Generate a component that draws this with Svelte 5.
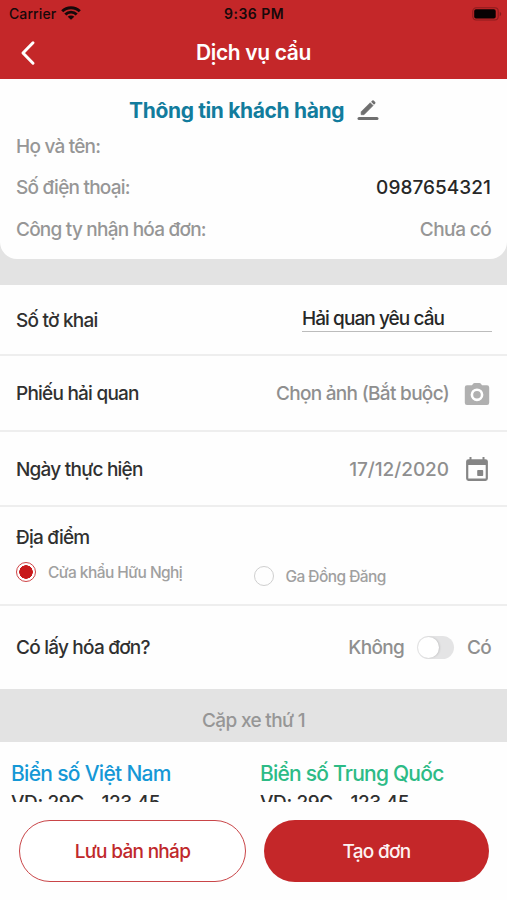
<script>
  let invoice = $state(false);
  let place = $state(0);
</script>

<div class="screen">
  <header>
    <div class="status">
      <span class="carrier">Carrier</span>
      <svg class="wifi" width="20" height="14" viewBox="0 0 20 14">
        <path d="M1.200 5.300a12.500 12.500 0 0 1 17.600 0M4.300 8.500a8 8 0 0 1 11.400 0" fill="none" stroke="#16090a" stroke-width="2.900" />
        <path d="M10 13.700 6.700 10.800a4.700 4.700 0 0 1 6.600 0z" fill="#16090a" />
      </svg>
      <span class="clock">9:36 PM</span>
      <svg class="battery" width="30" height="14" viewBox="0 0 30 14">
        <rect x="0.8" y="0.8" width="25.4" height="12.2" rx="3.4" fill="none" stroke="#8c1c1e" stroke-width="1.1" />
        <rect x="2.2" y="2.3" width="21.500" height="9.2" rx="1.8" fill="#080203" />
        <path d="M27.7 4.8v4.4q1.6-.7 1.6-2.2t-1.6-2.2z" fill="#8c1c1e" />
      </svg>
    </div>
    <div class="nav">
      <svg class="back" width="16" height="26" viewBox="0 0 16 26">
        <path d="M13 2.8 3 13l10 10.2" fill="none" stroke="#fff" stroke-width="3" stroke-linecap="round" stroke-linejoin="round" />
      </svg>
      <h1>Dịch vụ cẩu</h1>
    </div>
  </header>

  <main>
    <div class="backdrop">
      <section class="customer">
        <div class="heading">
          <h2>Thông tin khách hàng</h2>
          <svg width="22" height="22" viewBox="0 0 22 22">
            <path d="M4.1 12.8 13.2 3.7l2.9 2.9L7 15.7H4.1z" fill="#6f6f6f" stroke="#6f6f6f" stroke-width=".6" stroke-linejoin="round" />
            <path d="m14.1 2.8 1.2-1.2q.7-.6 1.4 0l1.5 1.5q.6.7 0 1.4L17 5.7z" fill="#6f6f6f" />
            <path d="M2 19.4h18" stroke="#6f6f6f" stroke-width="3" stroke-linecap="round" />
          </svg>
        </div>
        <div class="info"><span>Họ và tên:</span></div>
        <div class="info"><span>Số điện thoại:</span><span class="phone">0987654321</span></div>
        <div class="info"><span>Công ty nhận hóa đơn:</span><span class="company">Chưa có</span></div>
      </section>
    </div>

    <div class="row r1">
      <span>Số tờ khai</span>
      <div class="field"><span>Hải quan yêu cầu</span></div>
    </div>
    <div class="row r2">
      <span>Phiếu hải quan</span>
      <div class="value">
        <span>Chọn ảnh (Bắt buộc)</span>
        <svg width="26" height="24" viewBox="0 0 26 24">
          <path d="M3 3.300h5l1.300-1.700q.5-.6 1.200-.6h5q.7 0 1.200.6L18 3.300h5q2.200 0 2.200 2.200v15.200q0 2.200-2.200 2.200H3q-2.200 0-2.200-2.200V5.500Q.8 3.300 3 3.300z" fill="#b0b0b0" />
          <circle cx="13" cy="12.800" r="5.100" fill="none" stroke="#fff" stroke-width="2.600" />
        </svg>
      </div>
    </div>
    <div class="row r3">
      <span>Ngày thực hiện</span>
      <div class="value">
        <span class="date">17/12/2020</span>
        <svg width="26" height="26" viewBox="0 0 26 26">
          <path d="M4.500 3.200h17q2.400 0 2.400 2.400v17q0 2.400-2.400 2.400h-17q-2.400 0-2.400-2.400v-17q0-2.400 2.400-2.400zM4.300 9.100v13.500h17.400V9.100z" fill="#858585" fill-rule="evenodd" />
          <path d="M6.500 1v3M19.500 1v3" stroke="#858585" stroke-width="2" />
          <rect x="13.200" y="14" width="6" height="6" rx=".8" fill="#858585" />
        </svg>
      </div>
    </div>

    <div class="place">
      <span>Địa điểm</span>
      <div class="options">
        <button class="option" onclick={() => (place = 0)}>
          <i class="radio" class:on={place === 0}></i><span>Cửa khẩu Hữu Nghị</span>
        </button>
        <button class="option second" onclick={() => (place = 1)}>
          <i class="radio" class:on={place === 1}></i><span>Ga Đồng Đăng</span>
        </button>
      </div>
    </div>

    <div class="row r5">
      <span>Có lấy hóa đơn?</span>
      <div class="toggle">
        <span>Không</span>
        <button class="switch" class:active={invoice} aria-label="Có lấy hóa đơn" onclick={() => (invoice = !invoice)}><i></i></button>
        <span>Có</span>
      </div>
    </div>

    <div class="pair"><span>Cặp xe thứ 1</span></div>
    <div class="plates">
      <div class="plate vn"><h3>Biển số Việt Nam</h3><p>VD: 29C - 123.45</p></div>
      <div class="plate cn"><h3>Biển số Trung Quốc</h3><p>VD: 29C - 123.45</p></div>
    </div>
  </main>

  <footer>
    <button class="draft"><span>Lưu bản nháp</span></button>
    <button class="create"><span>Tạo đơn</span></button>
  </footer>
</div>

<style>
  :global(body) { background: #fefefe; }
  .screen {
    width: 507px;
    height: 900px;
    overflow: hidden;
    display: flex;
    flex-direction: column;
    background: #fefefe;
    color: #303030;
    font-family: Inter, "Liberation Sans", sans-serif;
    font-size: 19px;
    font-weight: 450;
    line-height: 24px;
    letter-spacing: -0.77px;
    white-space: nowrap;
  }
  h1, h2, h3, p { margin: 0; }
  span { display: block; }
  svg { display: block; flex: none; }
  button { font: inherit; letter-spacing: inherit; color: inherit; padding: 0; border: 0; background: none; }

  header { height: 79px; flex: none; background: #c42729; }
  .status {
    height: 27px;
    display: grid;
    grid-template-columns: 62px 18px 1fr 30px;
    align-items: center;
    padding: 0 5px 0 9px;
    color: #16090a;
    font-size: 14px;
  }
  .carrier { letter-spacing: 0.1px; }
  .wifi { margin-left: -10px; margin-top: -1px; }
  .clock { font-weight: 600; margin-left: 135px; letter-spacing: 0.5px; }
  .nav { height: 52px; display: flex; align-items: center; padding-left: 20px; }
  h1 { margin-left: 160px; font-size: 21px; font-weight: 600; color: #fff; letter-spacing: -0.35px; }

  main { height: 723px; flex: none; overflow: hidden; }
  .backdrop { height: 206px; background: #e3e3e3; }
  .customer { height: 180px; border-radius: 0 0 17px 17px; background: #fefefe; }
  .heading { box-sizing: border-box; height: 47px; display: flex; align-items: center; padding: 17px 0 0 129px; }
  .heading svg { margin: -2px 0 0 13px; }
  h2 { font-size: 21px; font-weight: 650; color: #127c9d; letter-spacing: -0.35px; }
  .info { height: 41.500px; display: flex; align-items: center; justify-content: space-between; padding: 0 16px; color: #969696; }
  .phone { color: #272727; letter-spacing: 0.05px; }
  .company { letter-spacing: -0.65px; }

  .row { display: flex; align-items: center; justify-content: space-between; padding: 2px 16px 0; box-sizing: border-box; border-bottom: 2px solid #eee; }
  .r1 { height: 71px; }
  .r2 { height: 76px; }
  .r3 { height: 75px; }
  .r5 { height: 83px; border: 0; padding-top: 0; }
  .field { width: 190px; height: 24px; border-bottom: 1px solid #bcbcbc; margin-top: -3px; padding-top: 1px; margin-right: -1px; color: #272727; }
  .field { letter-spacing: -0.92px; }
  .value { display: flex; align-items: center; gap: 15px; padding-right: 1px; color: #8f8f8f; letter-spacing: -0.7px; }
  .r2 svg, .r3 svg { margin-top: -1px; }
  .date { letter-spacing: -0.05px; }

  .place { height: 99px; box-sizing: border-box; padding: 19px 16px 0; border-bottom: 2px solid #eee; }
  .options { display: flex; margin-top: 12px; font-size: 15.500px; line-height: 20px; letter-spacing: -0.56px; color: #a0a0a0; }
  .option { display: flex; align-items: center; gap: 12px; width: 238px; height: 20px; }
  .option span { padding-top: 2px; }
  .second { margin-top: 4px; }
  .radio { width: 20px; height: 20px; box-sizing: border-box; border: 1.500px solid #cfcfcf; border-radius: 50%; flex: none; }
  .radio.on { border-color: #cf4446; background: radial-gradient(circle, #c8191b 6.500px, #fff 7px); }

  .toggle { display: flex; align-items: center; color: #8f8f8f; letter-spacing: -0.7px; }
  .switch { width: 37px; height: 23px; border-radius: 12px; background: #e4e4e5; margin: 0 13px; padding: 1px; }
  .switch i { display: block; width: 21px; height: 21px; border-radius: 50%; background: #fff; box-shadow: 1px 0 2px #0002; }
  .switch.active i { margin-left: 14px; }

  .pair { height: 52.500px; display: flex; align-items: center; justify-content: center; padding-top: 12px; box-sizing: border-box; background: #e3e3e3; color: #969696; letter-spacing: -0.65px; }
  .plates { display: flex; padding: 20px 0 0 11px; }
  .plate { width: 249px; flex: none; }
  h3 { font-size: 21px; font-weight: 450; }
  .vn h3 { color: #1598d6; letter-spacing: -0.7px; }
  .cn h3 { color: #2dbb86; }
  p { margin-top: 5px; letter-spacing: -0.4px; }

  footer { height: 98px; display: flex; gap: 18px; padding: 18px 18px 0 19px; box-sizing: border-box; background: #fefefe; }
  footer button { height: 62px; border-radius: 31px; display: flex; align-items: center; justify-content: center; padding-top: 2px; box-sizing: border-box; letter-spacing: -0.7px; }
  .draft { width: 227px; border: 1.500px solid #c94548; color: #c0282b; background: #fff; }
  .create { width: 225px; background: #c42729; color: #fdf2f2; }
</style>
